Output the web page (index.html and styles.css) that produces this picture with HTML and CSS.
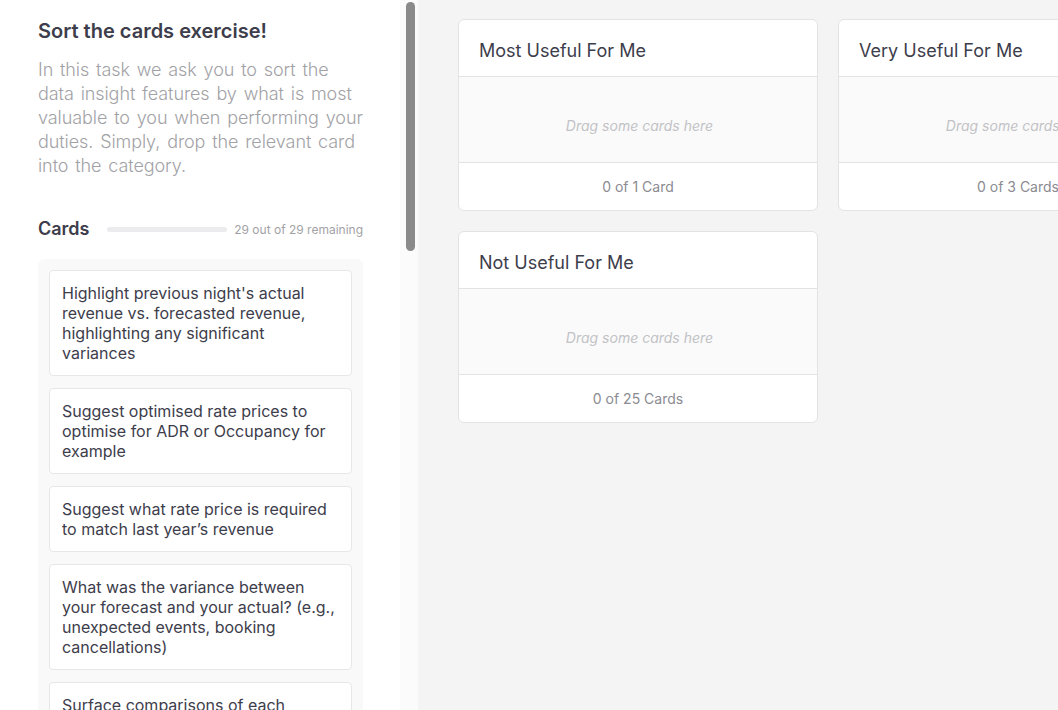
FILE: index.html
```html
<!DOCTYPE html>
<html lang="en">
<head>
<meta charset="utf-8">
<title>Sort the cards exercise</title>
<link rel="stylesheet" href="styles.css">
</head>
<body>
<div class="app">
  <aside class="sidebar">
    <div class="sidebar-content">
      <h1 class="title">Sort the cards exercise!</h1>
      <p class="intro">In this task we ask you to sort the data insight features by what is most valuable to you when performing your duties. Simply, drop the relevant card into the category.</p>
      <div class="cards-head">
        <h2 class="cards-label">Cards</h2>
        <div class="progress"><div class="progress-fill" style="width:0%"></div></div>
        <span class="remaining">29 out of 29 remaining</span>
      </div>
      <div class="card-list">
        <div class="card">Highlight previous night's actual revenue vs. forecasted revenue, highlighting any significant variances</div>
        <div class="card">Suggest optimised rate prices to optimise for ADR or Occupancy for example</div>
        <div class="card">Suggest what rate price is required to match last year’s revenue</div>
        <div class="card">What was the variance between your forecast and your actual? (e.g., unexpected events, booking cancellations)</div>
        <div class="card">Surface comparisons of each segment's performance against the same period last year</div>
      </div>
    </div>
    <div class="scroll-track"><div class="scroll-thumb"></div></div>
  </aside>
  <main class="board">
    <div class="categories">
      <section class="category">
        <header class="cat-head">Most Useful For Me</header>
        <div class="cat-drop"><span>Drag some cards here</span></div>
        <footer class="cat-foot">0 of 1 Card</footer>
      </section>
      <section class="category">
        <header class="cat-head">Very Useful For Me</header>
        <div class="cat-drop"><span>Drag some cards here</span></div>
        <footer class="cat-foot">0 of 3 Cards</footer>
      </section>
      <section class="category">
        <header class="cat-head">Not Useful For Me</header>
        <div class="cat-drop"><span>Drag some cards here</span></div>
        <footer class="cat-foot">0 of 25 Cards</footer>
      </section>
    </div>
  </main>
</div>
</body>
</html>
```

FILE: styles.css
```css
* { box-sizing: border-box; }
html, body {
  margin: 0;
  height: 100%;
  overflow: hidden;
}
body {
  font-family: Inter, "Noto Sans", "Liberation Sans", sans-serif;
  color: #3d3d4b;
  background: #f4f4f4;
}
.app {
  display: flex;
  height: 710px;
  width: 1058px;
  overflow: hidden;
}
.sidebar {
  flex: 0 0 418px;
  display: flex;
  background: #ffffff;
  height: 710px;
  overflow: hidden;
}
.sidebar-content {
  flex: 0 0 400px;
  padding: 17px 37px 0 38px;
  overflow: hidden;
}
.title {
  margin: 0;
  font-size: 20px;
  line-height: 28px;
  font-weight: 600;
  color: #3d3d4b;
}
.intro {
  margin: 13px -3px 0 0;
  font-size: 18px;
  line-height: 24px;
  font-weight: 300;
  letter-spacing: -0.08px;
  word-spacing: 1.9px;
  color: #a2a2a6;
}
.cards-head {
  margin-top: 39px;
  display: flex;
  align-items: center;
  height: 24px;
}
.cards-label {
  margin: 0;
  font-size: 18px;
  line-height: 24px;
  font-weight: 600;
  color: #3d3d4b;
}
.progress {
  margin-left: 18px;
  width: 120px;
  height: 5px;
  border-radius: 3px;
  background: #ececee;
  overflow: hidden;
}
.progress-fill {
  height: 100%;
  background: #3d3d4b;
}
.remaining {
  margin-left: auto;
  font-size: 12px;
  color: #a2a2a6;
}
.card-list {
  margin-top: 18px;
  background: #f9f9f9;
  border-radius: 6px;
  padding: 11px;
  display: flex;
  flex-direction: column;
  gap: 12px;
}
.card {
  background: #ffffff;
  border: 1px solid #e7e7e9;
  border-radius: 4px;
  padding: 12px;
  font-size: 16px;
  line-height: 20px;
  color: #3d3d4b;
}
.scroll-track {
  flex: 0 0 18px;
  background: #fbfbfb;
  padding: 2px 4px 0 6px;
}
.scroll-thumb {
  width: 9px;
  height: 249px;
  border-radius: 5px;
  background: #8a8a8a;
}
.board {
  flex: 1 0 auto;
  padding: 19px 0 0 40px;
  background: #f4f4f4;
}
.categories {
  display: grid;
  grid-template-columns: 360px 360px;
  gap: 20px;
  align-items: start;
}
.category {
  background: #ffffff;
  border: 1px solid #e3e3e5;
  border-radius: 6px;
  overflow: hidden;
}
.cat-head {
  height: 57px;
  padding: 4px 20px 0;
  display: flex;
  align-items: center;
  font-size: 18px;
  color: #3d3d4b;
  border-bottom: 1px solid #e3e3e5;
}
.cat-drop {
  height: 86px;
  background: #fafafa;
  display: flex;
  justify-content: center;
  padding-top: 40px;
  font-size: 14px;
  font-style: italic;
  color: #c2c2c6;
  border-bottom: 1px solid #e3e3e5;
}
.cat-drop span { line-height: 18px; margin-left: 3px; }
.cat-foot {
  height: 47px;
  display: flex;
  align-items: center;
  justify-content: center;
  font-size: 14px;
  color: #8b8b91;
}
```
